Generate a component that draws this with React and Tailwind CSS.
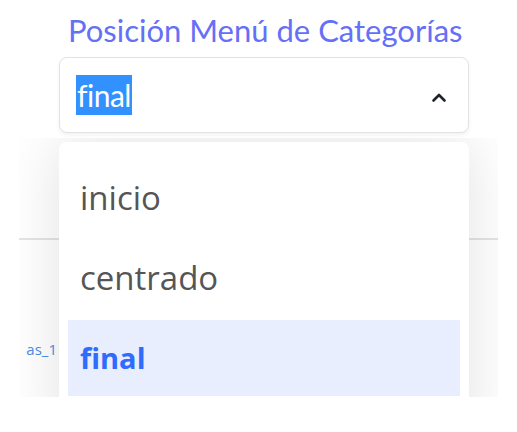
import React from 'react'

const options = ['inicio', 'centrado', 'final']

function ChevronUp() {
  return (
    <svg width="16" height="12" viewBox="0 0 16 12" fill="none">
      <path d="M2.5 9.5 L8 4 L13.5 9.5" stroke="#1f2328" strokeWidth="2.6" strokeLinecap="round" strokeLinejoin="round" />
    </svg>
  )
}

export default function App() {
  const selected = 'final'

  return (
    <div className="w-[517px] h-[432px] bg-white overflow-hidden font-['Lato',sans-serif]">
      {/* Field label */}
      <div className="pt-[11px] pl-[68px] text-[31px] leading-[38px] text-[#6470f5] whitespace-nowrap">
        Posición Menú de Categorías
      </div>

      {/* Select control */}
      <div className="mt-[8px] ml-[59px] w-[410px] h-[76px] rounded-lg border border-[#e3e3e3] bg-white shadow-[0_2px_4px_rgba(0,0,0,0.06)] flex items-center pl-[16px] pr-[21px]">
        <span className="bg-[#3390ff] text-white text-[30px] leading-[40px] h-[40px] px-[1px] tracking-[-0.5px]">final</span>
        <div className="ml-auto mt-[3px]">
          <ChevronUp />
        </div>
      </div>

      {/* Content behind the menu */}
      <div className="relative mt-[5px] ml-[19px] w-[479px] h-[259px] overflow-hidden">
        <div className="h-[102px] border-b-2 border-[#e4e4e4]" />
        <div className="absolute left-[0px] top-[200px] w-[38px] text-right text-[15px] text-[#4a8ee6] font-['Open_Sans',sans-serif]">
          as_1
        </div>

        {/* Dropdown menu */}
        <div className="absolute left-[40px] top-[4px] w-[410px] h-[300px] bg-white rounded-lg shadow-[0_0_60px_rgba(0,0,0,0.12)] px-[9px] pt-[18px] flex flex-col gap-[4px] font-['Open_Sans',sans-serif]">
          {options.map(opt => (
            <div
              key={opt}
              className={`h-[76px] flex items-center pl-[12px] ${
                opt === selected ? 'bg-[#e8eefd] text-[#2f6bff] font-bold text-[29px]' : 'text-[#555555] text-[33px]'
              }`}
            >
              {opt}
            </div>
          ))}
        </div>
      </div>
    </div>
  )
}
